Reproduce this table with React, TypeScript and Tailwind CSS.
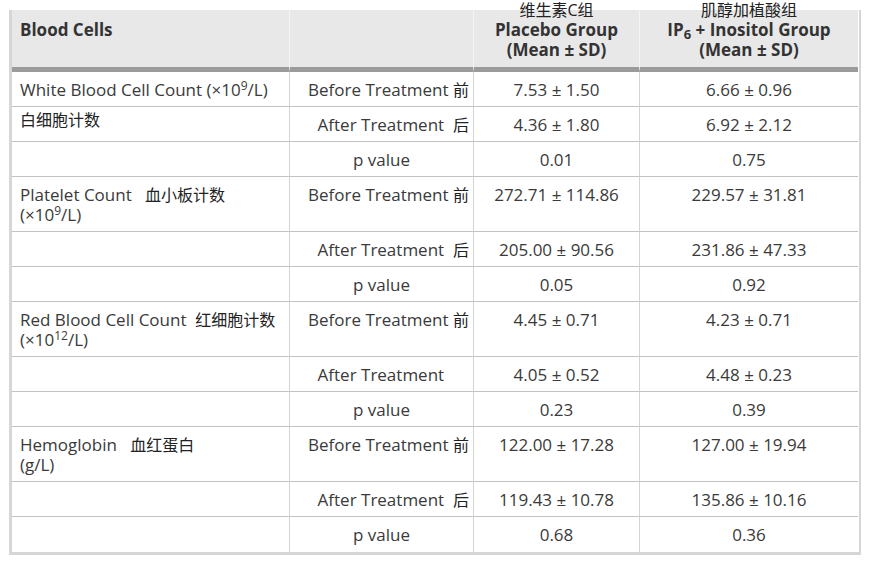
const font = { fontFamily: '"Open Sans", "Noto Sans CJK SC", sans-serif' };

type Row = {
  label?: React.ReactNode;
  phase: React.ReactNode;
  placebo: string;
  ip6: string;
  tall?: boolean;
  phaseCenter?: boolean;
  labelTight?: boolean;
};

const zh = "text-[#222] text-[16px]";

const before = (
  <>
    Before Treatment <span className={zh}>前</span>
  </>
);
const after = (
  <>
    After Treatment&nbsp;&nbsp;<span className={zh}>后</span>
  </>
);
const afterBare = (
  <>
    After Treatment&nbsp;&nbsp;<span className={`${zh} invisible`}>后</span>
  </>
);

const rows: Row[] = [
  {
    label: (
      <>
        White Blood Cell Count (×10<sup className="text-[12px]">9</sup>/L)
      </>
    ),
    phase: before,
    placebo: "7.53 ± 1.50",
    ip6: "6.66 ± 0.96",
  },
  {
    label: <span className={zh}>白细胞计数</span>,
    labelTight: true,
    phase: after,
    placebo: "4.36 ± 1.80",
    ip6: "6.92 ± 2.12",
  },
  { phase: "p value", phaseCenter: true, placebo: "0.01", ip6: "0.75" },
  {
    label: (
      <>
        Platelet Count&nbsp;&nbsp; <span className={zh}>血小板计数</span>
        <br />
        (×10<sup className="text-[12px]">9</sup>/L)
      </>
    ),
    tall: true,
    phase: before,
    placebo: "272.71 ± 114.86",
    ip6: "229.57 ± 31.81",
  },
  { phase: after, placebo: "205.00 ± 90.56", ip6: "231.86 ± 47.33" },
  { phase: "p value", phaseCenter: true, placebo: "0.05", ip6: "0.92" },
  {
    label: (
      <>
        Red Blood Cell Count&nbsp; <span className={zh}>红细胞计数</span>
        <br />
        (×10<sup className="text-[12px]">12</sup>/L)
      </>
    ),
    tall: true,
    phase: before,
    placebo: "4.45 ± 0.71",
    ip6: "4.23 ± 0.71",
  },
  { phase: afterBare, placebo: "4.05 ± 0.52", ip6: "4.48 ± 0.23" },
  { phase: "p value", phaseCenter: true, placebo: "0.23", ip6: "0.39" },
  {
    label: (
      <>
        Hemoglobin&nbsp;&nbsp; <span className={zh}>血红蛋白</span>
        <br />
        (g/L)
      </>
    ),
    tall: true,
    phase: before,
    placebo: "122.00 ± 17.28",
    ip6: "127.00 ± 19.94",
  },
  { phase: after, placebo: "119.43 ± 10.78", ip6: "135.86 ± 10.16" },
  { phase: "p value", phaseCenter: true, placebo: "0.68", ip6: "0.36" },
];

function HeaderCell({ zhText, children, last }: { zhText?: string; children: React.ReactNode; last?: boolean }) {
  return (
    <div
      className={
        "h-[62px] bg-[#e8e8e8] border-b-[5px] border-[#9b9b9b] pt-[10px] text-center font-bold text-[#333] leading-[20px] whitespace-nowrap " +
        (last ? "" : "border-r border-r-[#f4f4f4]")
      }
    >
      {zhText && <div className="-mt-[20px] font-normal text-[#222] text-[16px]">{zhText}</div>}
      {children}
    </div>
  );
}

export default function App() {
  return (
    <div className="bg-white w-[874px] h-[565px] pt-[10px] pl-[9px]" style={font}>
      <div className="w-[852px] border-l-[3px] border-r-[2px] border-b-[3px] border-[#d6d6d6] text-[17px] text-[#3a3a3a]">
        <div className="grid grid-cols-[278px_184px_166px_218px]">
          <div className="h-[62px] bg-[#e8e8e8] border-b-[5px] border-[#9b9b9b] border-r border-r-[#f4f4f4] pt-[10px] pl-[8px] font-bold text-[#333] leading-[20px]">
            Blood Cells
          </div>
          <HeaderCell>{""}</HeaderCell>
          <HeaderCell zhText="维生素C组">
            Placebo Group
            <br />
            (Mean ± SD)
          </HeaderCell>
          <HeaderCell zhText="肌醇加植酸组" last>
            IP<sub className="text-[13px]">6</sub> + Inositol Group
            <br />
            (Mean ± SD)
          </HeaderCell>

          {rows.map((r, i) => {
            const h = r.tall ? "h-[55px]" : "h-[35px]";
            const cell = `${h} border-b border-[#c2c2c2] leading-[19px] whitespace-nowrap`;
            const last = i === rows.length - 1;
            const bb = last ? " border-b-0 h-[34px]" : "";
            return (
              <div key={i} className="contents">
                <div className={`${cell}${bb} border-r border-r-[#d4d4d4] pl-[8px] ${r.labelTight ? "pt-[3px]" : "pt-[8px]"}`}>
                  {r.label}
                </div>
                <div
                  className={`${cell}${bb} border-r border-r-[#d4d4d4] pt-[8px] ${
                    r.phaseCenter ? "text-center" : "text-right pr-[4px]"
                  }`}
                >
                  {r.phase}
                </div>
                <div className={`${cell}${bb} border-r border-r-[#d4d4d4] pt-[8px] text-center`}>{r.placebo}</div>
                <div className={`${cell}${bb} pt-[8px] text-center`}>{r.ip6}</div>
              </div>
            );
          })}
        </div>
      </div>
    </div>
  );
}
